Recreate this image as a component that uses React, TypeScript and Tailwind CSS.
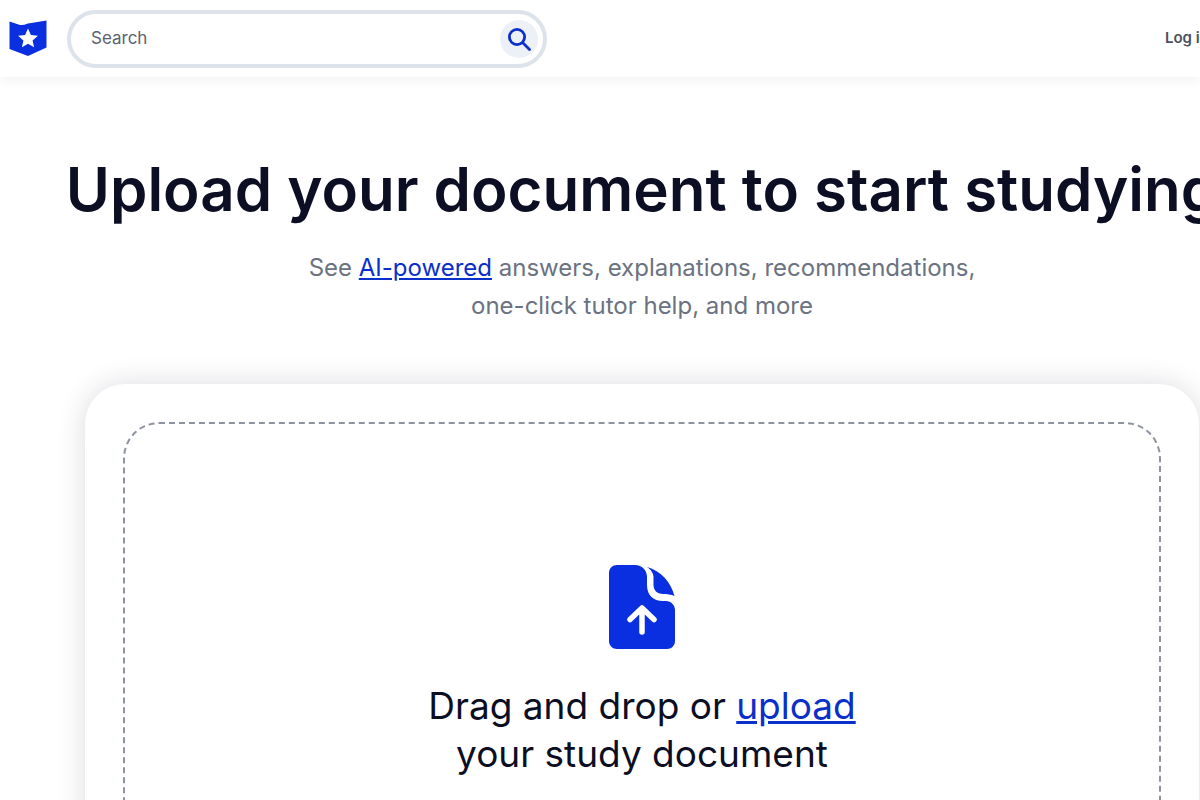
import React from 'react';

function Logo() {
    return (
        <svg width="38" height="37" viewBox="0 0 38 37">
            <path d="M0.5 1.5 L11 5 Q14 5.5 19 3.5 L37.5 0.5 V27.5 L19 36 L0.5 29 Z" fill="#0a2fe0" />
            <path d="M19 8.5 L21.9 15 L28.9 15.7 L23.6 20.4 L25.1 27.3 L19 23.7 L12.9 27.3 L14.4 20.4 L9.1 15.7 L16.1 15 Z" fill="#fff" />
        </svg>
    );
}

function SearchIcon() {
    return (
        <svg width="24" height="24" viewBox="0 0 24 24" fill="none" stroke="#0b2fc9" strokeWidth="2.8" strokeLinecap="round">
            <circle cx="10" cy="10" r="7.6" />
            <path d="M15.8 15.8 L22.5 22.5" />
        </svg>
    );
}

function UploadDocIcon() {
    return (
        <svg width="66" height="84" viewBox="0 0 66 84">
            <path d="M8 0 H26 C33 0 38 5 38 12 V20 C38 30 44 36 54 36 H57 C62 36 66 40 66 45 V76 C66 80.500 62.500 84 58 84 H8 C3.500 84 0 80.500 0 76 V8 C0 3.500 3.500 0 8 0 Z" fill="#0a2fe0" />
            <path d="M38 2 C52 6 62 17 65.500 31 C62 29.500 58 29 54 29 C48 29 44.500 25 44.500 20 V12 C44.500 8.500 42 4.500 38 2 Z" fill="#0a2fe0" />
            <path d="M33 67 V44 M21 54.500 L33 43 L45 54.500" fill="none" stroke="#fff" strokeWidth="5.500" strokeLinecap="round" strokeLinejoin="round" />
        </svg>
    );
}

export default function App() {
    return (
        <div className="h-[800px] w-[1200px] overflow-hidden bg-white font-['Inter',sans-serif]">
            <header className="relative z-10 flex h-[77px] items-center justify-between bg-white pl-[9px] shadow-[0_2px_12px_rgba(30,40,60,0.07)]">
                <div className="flex items-center gap-[20px]">
                    <Logo />
                    <div className="flex h-[58px] w-[480px] items-center justify-between rounded-full border-[4px] border-[#dde3ea] pl-[20px] pr-[5px]">
                        <span className="text-[17px] text-[#5c6370]">Search</span>
                        <div className="flex h-[38px] w-[38px] items-center justify-center rounded-full bg-[#edf0f7]">
                            <SearchIcon />
                        </div>
                    </div>
                </div>
                <span className="w-[35px] overflow-hidden whitespace-nowrap text-[15px] font-semibold text-[#4b5160]">Log in</span>
            </header>

            <main className="pl-[85px] pr-px">
                <div className="flex flex-col items-center pt-[74px]">
                    <h1 className="whitespace-nowrap text-[60px] font-semibold leading-[76px] text-[#0c0f24]">
                        Upload your document to start studying
                    </h1>
                    <p className="mt-[22px] text-center text-[24px] leading-[38px] text-[#6b7280]">
                        See <a className="text-[#0b2fc9] underline">AI-powered</a> answers, explanations, recommendations,
                        <br />
                        one-click tutor help, and more
                    </p>
                </div>

                <div className="mt-[59px] h-[500px] rounded-[40px] bg-white p-[38px] shadow-[0_0_28px_rgba(30,40,60,0.16)]">
                    <div className="flex h-[560px] flex-col items-center rounded-[36px] border-2 border-dashed border-[#8d949f] pt-[141px]">
                        <UploadDocIcon />
                        <p className="mt-[33px] text-center text-[37px] leading-[48px] text-[#0c0f24]">
                            Drag and drop or <a className="text-[#0b2fc9] underline">upload</a>
                            <br />
                            your study document
                        </p>
                    </div>
                </div>
            </main>
        </div>
    );
}
